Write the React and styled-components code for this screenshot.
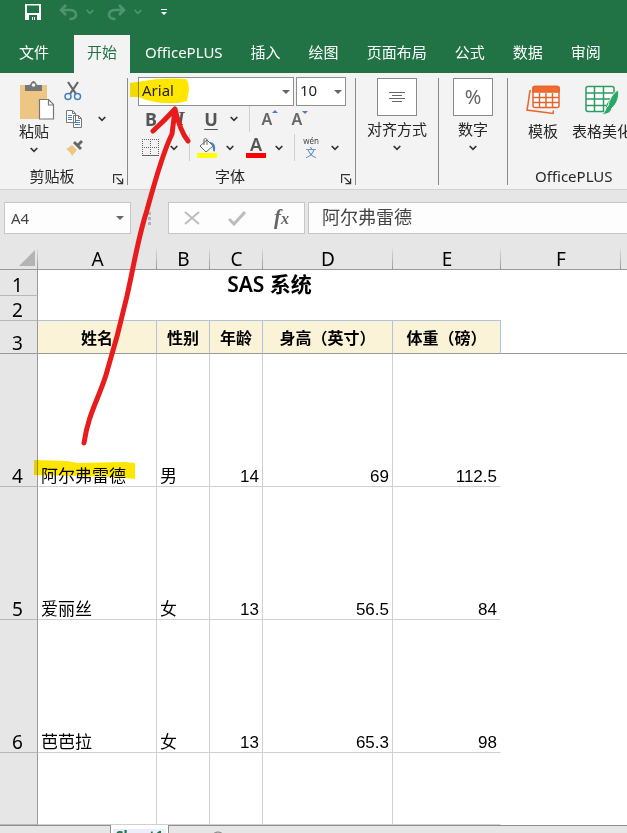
import React from "react";
import styled, { createGlobalStyle, css } from "styled-components";

const UI_FONT = '"Noto Sans", "Noto Sans CJK SC", sans-serif';
const CELL_FONT = '"Liberation Sans", "Noto Sans CJK SC", sans-serif';

const GlobalStyle = createGlobalStyle`
  * { box-sizing: border-box; }
  body { margin: 0; overflow: hidden; font-family: ${UI_FONT}; font-size: 15px; color: #262626; }
  button, input, select { font: inherit; color: inherit; }
`;

const Window = styled.div`
  position: relative;
  display: flex;
  flex-direction: column;
  height: 100vh;
  overflow: hidden;
  background: #fff;
`;

const PlainButton = styled.button`
  display: flex;
  align-items: center;
  justify-content: center;
  flex: none;
  padding: 0;
  border: 0;
  background: transparent;
`;

/* ---------- title bar and tabs ---------- */
const TitleBar = styled.header`
  display: flex;
  align-items: flex-start;
  flex: none;
  height: 35px;
  padding: 2px 23px;
  background: #217346;
`;

const QuickButton = styled(PlainButton)`
  width: ${(p) => (p.$narrow ? 24 : 20)}px;
  height: 20px;
  margin-right: ${(p) => p.$gap || 0}px;
  color: ${(p) => (p.$dim ? "#4f9470" : "#fff")};
`;

const TabBar = styled.nav`
  display: flex;
  flex: none;
  gap: 2px;
  height: 38px;
  padding-left: 6px;
  overflow: hidden;
  background: #217346;
`;

const Tab = styled(PlainButton)`
  padding: 0 13px 5px;
  margin-right: ${(p) => (p.$file ? 10 : 0)}px;
  line-height: 20px;
  white-space: nowrap;
  color: ${(p) => (p.$active ? "#217346" : "#fff")};
  background: ${(p) => (p.$active ? "#f3f3f3" : "transparent")};
`;

/* ---------- ribbon ---------- */
const Ribbon = styled.section`
  display: flex;
  flex: none;
  height: 117px;
  padding: 5px 0 4px;
  overflow: hidden;
  background: #f3f3f3;
  border-bottom: 1px solid #d2d2d2;
`;

const Group = styled.div`
  display: flex;
  flex-direction: column;
  flex: ${(p) => (p.$width ? "none" : "1 0 auto")};
  width: ${(p) => (p.$width ? `${p.$width}px` : "auto")};
  border-right: ${(p) => (p.$width ? "1px solid #8a8a8a" : "0")};
`;

const GroupBody = styled.div`
  display: flex;
  flex: 1;
  flex-direction: ${(p) => (p.$column ? "column" : "row")};
  padding-left: ${(p) => p.$inset || 0}px;
  justify-content: ${(p) => (p.$center ? "center" : "flex-start")};
`;

const GroupFooter = styled.div`
  display: flex;
  flex: none;
  height: 18px;
  align-items: center;
  white-space: nowrap;
  padding-left: ${(p) => p.$inset || 0}px;
`;

const GroupTitle = styled.span`
  flex: ${(p) => (p.$left ? "none" : 1)};
  padding-right: 5px;
  text-align: center;
  line-height: 18px;
`;

const Launcher = styled(PlainButton)`
  width: 18px;
  height: 18px;
  padding-top: 6px;
`;

const LargeButton = styled.button`
  display: flex;
  flex-direction: column;
  align-items: center;
  flex: none;
  width: ${(p) => p.$width}px;
  padding: ${(p) => p.$top || 0}px 0 0;
  border: 0;
  background: transparent;
  line-height: 22px;
  white-space: nowrap;
`;

const LargeLabel = styled.span`
  margin: ${(p) => p.$top || 0}px 0 5px;
`;

const PasteArt = styled.span`
  display: flex;
  padding-left: 5px;
`;

const IconFrame = styled.span`
  display: flex;
  align-items: center;
  justify-content: center;
  width: 40px;
  height: 38px;
  border: 1px solid #8a8a8a;
  background: #fff;
  color: #666;
  font-size: 20px;
`;

const ToolColumn = styled.div`
  display: flex;
  flex-direction: column;
`;

const ToolRow = styled.div`
  display: flex;
  flex: none;
  align-items: center;
  height: ${(p) => p.$height || 29}px;
  padding-left: ${(p) => p.$inset || 0}px;
`;

const ToolButton = styled(PlainButton)`
  width: ${(p) => p.$width || 30}px;
  height: 28px;
  color: #555;
`;

const ChevronButton = styled(PlainButton)`
  width: 16px;
  height: 28px;
  margin-right: ${(p) => p.$gap || 0}px;
`;

const Divider = styled.span`
  flex: none;
  width: 1px;
  height: 27px;
  margin: 0 2px 0 7px;
  background: #d0d0d0;
`;

const Letter = styled.span`
  font-size: 18px;
  line-height: 22px;
  font-weight: 700;
  ${(p) => p.$italic && css`
    font-family: "Liberation Serif", serif;
    font-style: italic;
  `}
  ${(p) => p.$underline && css`
    text-decoration: underline;
    text-underline-offset: 3px;
    text-decoration-thickness: 1px;
  `}
`;

const ComboWrap = styled.label`
  position: relative;
  display: flex;
  flex: none;
  width: ${(p) => p.$width}px;
  height: 29px;
  margin-right: 2px;
`;

const Combo = styled.select`
  appearance: none;
  width: 100%;
  padding: 0 20px 2px 3px;
  border: 1px solid #8f8f8f;
  border-radius: 0;
  background: #fff;
`;

const ComboArrow = styled.span`
  position: absolute;
  right: ${(p) => (p.$far ? 6 : 4)}px;
  top: 13px;
  border: 4px solid transparent;
  border-top-color: #666;
  border-bottom-width: 0;
  pointer-events: none;
`;

/* ---------- formula bar ---------- */
const FormulaBar = styled.div`
  display: flex;
  flex: none;
  padding: 12px 0 12px 4px;
  background: #e6e6e6;
  color: #444;
`;

const Field = styled.div`
  position: relative;
  display: flex;
  flex: ${(p) => (p.$width ? "none" : 1)};
  width: ${(p) => (p.$width ? `${p.$width}px` : "auto")};
  min-width: 0;
  height: 32px;
  margin-right: ${(p) => p.$gap || 0}px;
  border: 1px solid #c6c6c6;
  border-right-width: ${(p) => (p.$width ? 1 : 0)}px;
  background: #fdfdfd;
`;

const FieldInput = styled.input`
  width: 100%;
  min-width: 0;
  padding: 0 ${(p) => (p.$large ? 13 : 6)}px;
  border: 0;
  background: transparent;
  font-size: ${(p) => (p.$large ? 18 : 15)}px;
  outline: 0;
  height: ${(p) => (p.$large ? 25 : 30)}px;
`;

const FormulaButton = styled(PlainButton)`
  flex: 1;
`;

const Grip = styled.span`
  flex: none;
  width: 3px;
  height: 13px;
  margin: 10px 17px 0;
  background: repeating-linear-gradient(#b5b5b5 0 3px, transparent 3px 5px);
`;

/* ---------- sheet ---------- */
const Sheet = styled.main`
  flex: 1 0 auto;
  background: #fff;
`;

const Grid = styled.table`
  width: 100%;
  table-layout: fixed;
  border-collapse: separate;
  border-spacing: 0;
  color: #000;
`;

const Col = styled.col`
  width: ${(p) => (p.$width ? `${p.$width}px` : "auto")};
`;

const Row = styled.tr`
  height: ${(p) => p.$height}px;
`;

const ColumnHead = styled.th`
  padding: 2px 0 0;
  border-bottom: 1px solid #999;
  background: ${(p) => (p.$open ? "#e6e6e6" : "linear-gradient(#e6e6e6, #999) right / 1px 100% no-repeat #e6e6e6")};
  font-size: 19px;
  font-weight: 400;
  line-height: 20px;
`;

const Corner = styled(ColumnHead)`
  padding: 0 3px 0 0;

  svg { display: block; margin-left: auto; }
`;

const RowHead = styled.th`
  padding: 0 2px 0 0;
  border-right: 1px solid #999;
  border-bottom: 1px solid ${(p) => (p.$strong ? "#999" : "#b8b8b8")};
  background: #e6e6e6;
  font-size: 19px;
  font-weight: 400;
  line-height: 20px;
  vertical-align: bottom;
`;

const Blank = styled.td`
  padding: 0;
  border-bottom: ${(p) => (p.$frozen ? "1px solid #999" : "0")};
`;

const SheetTitle = styled.td`
  padding: 2px 0 0;
  font-family: "Noto Sans", "Noto Sans CJK SC", sans-serif;
  font-size: 21px;
  font-weight: 600;
  line-height: 24px;
  text-align: center;
`;

const Rule = styled.td`
  padding: 0;
  border-bottom: 1px solid #b0c4de;
`;

const FieldHead = styled.th`
  padding: 0;
  border-right: 1px solid #b0c4de;
  border-bottom: 1px solid #999;
  background: #faf3d7;
  font-family: "Noto Sans CJK SC", sans-serif;
  font-size: 16px;
  line-height: 20px;
  font-weight: 700;
`;

const Cell = styled.td`
  padding: 0 3px;
  border-right: 1px solid ${(p) => (p.$last ? "transparent" : "#d0d0d0")};
  border-bottom: 1px solid #d0d0d0;
  font-family: ${CELL_FONT};
  font-size: 17px;
  line-height: 18px;
  text-align: ${(p) => (p.$number ? "right" : "left")};
  vertical-align: bottom;
`;

/* ---------- sheet tabs ---------- */
const SheetTabs = styled.footer`
  display: flex;
  flex: none;
  height: 28px;
  background: #e6e6e6;
`;

const TabFiller = styled.div`
  flex: ${(p) => (p.$width ? "none" : 1)};
  width: ${(p) => p.$width || 0}px;
  padding-left: 41px;
  border: solid #8f8f8f;
  border-width: ${(p) => (p.$width ? "1px 1px 0 0" : "1px 0 0 1px")};
`;

const SheetTab = styled(PlainButton)`
  align-items: flex-start;
  width: 57px;
  border: solid #fff;
  border-width: 4px 2px 0;
  background: linear-gradient(#e9ecfb, #fff);
  color: #217346;
  font-size: 14px;
  font-weight: 700;
  line-height: 14px;
`;

const AddSheet = styled(PlainButton)`
  padding-top: 5px;
`;

/* ---------- ink markup over the window ---------- */
const Ink = styled.svg`
  position: absolute;
  left: 0;
  top: 0;
  pointer-events: none;
  mix-blend-mode: ${(p) => (p.$multiply ? "multiply" : "normal")};
`;

const Glyph = styled.svg`
  overflow: visible;
`;

const Chevron = ({ color = "#333", w = 8 }) => (
  <svg width={w} height="6" viewBox="0 0 8 6" fill="none" stroke={color} strokeWidth="1.7">
    <path d="M.7 1 4 4.3 7.3 1" />
  </svg>
);

const SaveIcon = () => (
  <svg width="16" height="16" viewBox="0 0 16 16">
    <path fill="#fff" fillRule="evenodd" d="M0 0h16v16H0zM2 1.500h12V9H2zM4 11h8v5h-2v-3H8v3H4z" />
    <path fill="#217346" d="M7 13h2v3H7z" />
    <path fill="#fff" d="M7 13h1v3H7z" />
  </svg>
);

const UndoIcon = ({ flip }) => (
  <svg width="19" height="17" viewBox="0 0 19 17" fill="none" stroke="currentColor" strokeWidth="2.600">
    <g transform={flip ? "translate(19 0) scale(-1 1)" : undefined}>
      <path d="M7 1 2 6l5 5M2.500 6H11c3 0 6 1.500 6 4.500S14.500 15 10.500 15" />
    </g>
  </svg>
);

const LauncherIcon = () => (
  <svg width="11" height="11" viewBox="0 0 11 11" fill="none" stroke="#333" strokeWidth="1.200">
    <path d="M.6 9V.6H9M3.500 3.500 9 9M9.600 4.500v5.100H4.500" />
  </svg>
);

const PasteIcon = () => (
  <svg width="36" height="40" viewBox="0 0 36 40">
    <path fill="#ecc682" d="M1 5h27v34H1z" />
    <path fill="#777" d="M6 5h4c2 0 2-4 4.500-4S17 5 19 5h4v6H6z" />
    <circle cx="14.500" cy="5" r="1.800" fill="#f3f3f3" />
    <path fill="#fff" stroke="#777" strokeWidth="1.200" d="M20.500 19.500h9l5 5V39h-14z" />
    <path fill="none" stroke="#777" strokeWidth="1.200" d="M29.500 19.500v5.500h5" />
  </svg>
);

const CutIcon = () => (
  <svg width="18" height="20" viewBox="0 0 18 20" fill="none">
    <path stroke="#666" strokeWidth="2.200" d="m4 1 8 12M14 1 6 13" />
    <circle cx="4" cy="15.500" r="3" stroke="#4a80bd" strokeWidth="1.500" />
    <circle cx="13.500" cy="15.500" r="3" stroke="#4a80bd" strokeWidth="1.500" />
  </svg>
);

const CopyIcon = () => (
  <svg width="18" height="20" viewBox="0 0 18 20" fill="#fff" stroke="#777">
    <path d="M1.500 1.500h6l3 3V13.500h-9zM8.500 6.500h5l3 3V18.500h-8z" />
    <path fill="none" d="M7.500 1.500v3h3M13.500 6.500v3h3" />
    <path stroke="#4a80bd" d="M3 6.500h4M3 8.500h4M3 10.500h4M10 11.500h5M10 13.500h5M10 15.500h5" />
  </svg>
);

const BrushIcon = () => (
  <svg width="18" height="16" viewBox="0 0 18 16">
    <path fill="#ecc682" d="M1 9c3-1 4-3 6-4l5 5c-2 2-3 4-5 6-1-3-3-5-6-7z" />
    <path fill="#666" d="m8 3 2-2 7 7-2 2zM12 4l4-4 2 2-4 4z" />
  </svg>
);

const BorderIcon = () => (
  <svg width="18" height="18" viewBox="0 0 18 18" fill="none" stroke="#666">
    <path strokeDasharray="1 1" d="M.5 0v16M16.500 0v16M0 .5h17M8.500 0v16M0 8.500h17" />
    <path d="M0 16.500h17" />
  </svg>
);

const FillIcon = () => (
  <svg width="20" height="20" viewBox="0 0 20 20" fill="none" stroke="#666">
    <path fill="#fff" d="m3 8 7-6 6 6-7 6z" />
    <path d="M7 7V2c0-2 3-2 3 0v5" />
    <path fill="#4a80bd" stroke="none" d="M12 4c4 0 7 2 6 9-1 1-2 0-2-1 0-3-1-5-4-8z" />
    <path fill="#ff0" stroke="none" d="M0 15h20v5H0z" />
  </svg>
);

const FontColorIcon = () => (
  <Glyph width="20" height="20" viewBox="0 0 20 20">
    <text x="10" y="13" textAnchor="middle" fontFamily="Noto Sans" fontWeight="600" fontSize="18" fill="#555">A</text>
    <path fill="red" d="M0 15h20v5H0z" />
  </Glyph>
);

const SizeIcon = ({ down }) => (
  <Glyph width="20" height="20" viewBox="0 0 20 20">
    <text x="8" y="16" textAnchor="middle" fontFamily="Noto Sans" fontWeight="600" fontSize="16" fill="#666">A</text>
    <path fill="#4a80bd" d={down ? "M13 2h6l-3 3z" : "M13 4h6l-3-3z"} />
  </Glyph>
);

const PhoneticIcon = () => (
  <Glyph width="20" height="22" viewBox="0 0 20 22" textAnchor="middle">
    <text x="9" y="7" fontFamily="Noto Sans" fontSize="8" fill="#444">wén</text>
    <text x="9" y="20" fontFamily="Noto Sans CJK SC" fontSize="11" fill="#4a80bd">文</text>
  </Glyph>
);

const CenterIcon = () => (
  <svg width="16" height="12" viewBox="0 0 16 12" stroke="#666">
    <path d="M0 1.500h16M3 4.500h10M0 7.500h16M3 10.500h10" />
  </svg>
);

const TemplateIcon = () => (
  <svg width="34" height="30" viewBox="0 0 34 30" fill="none" stroke="#e8642c" strokeWidth="1.500">
    <path d="M4.500 5C3 8 3.500 12 1 25l26 3.500.5-3" />
    <rect x="7" y="1.500" width="26" height="21" rx="2" fill="#fff" />
    <path fill="#f06c33" d="M7 7V3q0-1.500 1.500-1.500h23Q33 1.500 33 3v4z" />
    <path d="M7 12.500h26M7 17.500h26M13.500 8v15M20 8v15M26.500 8v15" />
  </svg>
);

const BeautifyIcon = () => (
  <svg width="34" height="30" viewBox="0 0 34 30" fill="none" stroke="#2c9d62" strokeWidth="1.500">
    <path fill="#fff" d="M21 26.500H3Q1 26.500 1 24.500V3.500Q1 1.500 3 1.500h24q2 0 2 2V9L22 20z" />
    <path d="M1 8h27M1 14h24M1 20.500h20M9.500 1.500v25M18.500 1.500v25" />
    <path fill="#2aa866" stroke="#f3f3f3" strokeWidth="1" d="M33 5c2 6-1 14-6 18-1 5-6 7-10 6 4-2 3-6 6-8 1-6 5-13 10-16z" />
  </svg>
);

const CrossIcon = () => (
  <svg width="16" height="14" viewBox="0 0 16 14" stroke="#bdbdbd" strokeWidth="2">
    <path d="m1 1 14 12M15 1 1 13" />
  </svg>
);

const CheckIcon = () => (
  <svg width="18" height="15" viewBox="0 0 18 15" fill="none" stroke="#bdbdbd" strokeWidth="3">
    <path d="m1 8 5 5L17 1" />
  </svg>
);

const Fx = styled.span`
  font: italic 700 21px/24px "Liberation Serif", serif;
  color: #666;

  small { font-size: 16px; }
`;

const tabs = ["开始", "OfficePLUS", "插入", "绘图", "页面布局", "公式", "数据", "审阅"];
const columns = [["A", 119], ["B", 53], ["C", 53], ["D", 130], ["E", 108], ["F", 120], ["", 0]];
const fields = ["姓名", "性别", "年龄", "身高（英寸）", "体重（磅）"];
const people = [
  ["阿尔弗雷德", "男", "14", "69", "112.5"],
  ["爱丽丝", "女", "13", "56.5", "84"],
  ["芭芭拉", "女", "13", "65.3", "98"],
];

export default function App() {
  return (
    <Window>
      <GlobalStyle />
      <TitleBar>
        <QuickButton aria-label="保存" $gap={15}><SaveIcon /></QuickButton>
        <QuickButton aria-label="撤销" $dim><UndoIcon /></QuickButton>
        <QuickButton aria-label="撤销列表" $dim $narrow $gap={4}><Chevron color="currentColor" /></QuickButton>
        <QuickButton aria-label="恢复" $dim><UndoIcon flip /></QuickButton>
        <QuickButton aria-label="恢复列表" $dim $narrow $gap={2}><Chevron color="currentColor" /></QuickButton>
        <QuickButton aria-label="自定义快速访问工具栏" $narrow>
          <svg width="6" height="8" viewBox="0 0 6 8" fill="#fff"><path d="M0 1h6v1H0zM0 4h6L3 7z" /></svg>
        </QuickButton>
      </TitleBar>

      <TabBar>
        <Tab $file>文件</Tab>
        {tabs.map((name, i) => <Tab key={name} $active={i === 0}>{name}</Tab>)}
      </TabBar>

      <Ribbon>
        <Group $width={128}>
          <GroupBody $inset={10}>
            <LargeButton $width={48} $top={2}>
              <PasteArt><PasteIcon /></PasteArt>
              <LargeLabel>粘贴</LargeLabel>
              <Chevron />
            </LargeButton>
            <ToolColumn>
              <ToolRow $height={26}><ToolButton aria-label="剪切"><CutIcon /></ToolButton></ToolRow>
              <ToolRow>
                <ToolButton aria-label="复制" $width={32}><CopyIcon /></ToolButton>
                <ToolButton aria-label="复制选项" $width={24}><Chevron /></ToolButton>
              </ToolRow>
              <ToolRow><ToolButton aria-label="格式刷" $width={32}><BrushIcon /></ToolButton></ToolRow>
            </ToolColumn>
          </GroupBody>
          <GroupFooter>
            <GroupTitle>剪贴板</GroupTitle>
            <Launcher aria-label="剪贴板选项"><LauncherIcon /></Launcher>
          </GroupFooter>
        </Group>

        <Group $width={228}>
          <GroupBody $column $inset={8}>
            <ToolRow $height={26} $inset={2}>
              <ComboWrap $width={156}>
                <Combo aria-label="字体" defaultValue="Arial"><option>Arial</option></Combo>
                <ComboArrow />
              </ComboWrap>
              <ComboWrap $width={50}>
                <Combo aria-label="字号" defaultValue="10"><option>10</option></Combo>
                <ComboArrow />
              </ComboWrap>
            </ToolRow>
            <ToolRow>
              <ToolButton aria-label="加粗"><Letter>B</Letter></ToolButton>
              <ToolButton aria-label="倾斜"><Letter $italic>I</Letter></ToolButton>
              <ToolButton aria-label="下划线"><Letter $underline>U</Letter></ToolButton>
              <ChevronButton aria-label="下划线样式"><Chevron /></ChevronButton>
              <Divider />
              <ToolButton aria-label="增大字号" $width={34}><SizeIcon /></ToolButton>
              <ToolButton aria-label="减小字号" $width={26}><SizeIcon down /></ToolButton>
            </ToolRow>
            <ToolRow>
              <ToolButton aria-label="边框"><BorderIcon /></ToolButton>
              <ChevronButton aria-label="边框样式"><Chevron /></ChevronButton>
              <Divider />
              <ToolButton aria-label="填充颜色"><FillIcon /></ToolButton>
              <ChevronButton aria-label="填充颜色列表" $gap={3}><Chevron /></ChevronButton>
              <ToolButton aria-label="字体颜色"><FontColorIcon /></ToolButton>
              <ChevronButton aria-label="字体颜色列表"><Chevron /></ChevronButton>
              <Divider />
              <ToolButton aria-label="拼音"><PhoneticIcon /></ToolButton>
              <ChevronButton aria-label="拼音选项"><Chevron /></ChevronButton>
            </ToolRow>
          </GroupBody>
          <GroupFooter>
            <GroupTitle>字体</GroupTitle>
            <Launcher aria-label="字体选项"><LauncherIcon /></Launcher>
          </GroupFooter>
        </Group>

        <Group $width={83}>
          <GroupBody $center>
            <LargeButton $width={80}>
              <IconFrame><CenterIcon /></IconFrame>
              <LargeLabel $top={2}>对齐方式</LargeLabel>
              <Chevron />
            </LargeButton>
          </GroupBody>
        </Group>

        <Group $width={69}>
          <GroupBody $center>
            <LargeButton $width={60}>
              <IconFrame>%</IconFrame>
              <LargeLabel $top={2}>数字</LargeLabel>
              <Chevron />
            </LargeButton>
          </GroupBody>
        </Group>

        <Group>
          <GroupBody $inset={6}>
            <LargeButton $width={58} $top={7}>
              <TemplateIcon />
              <LargeLabel $top={5}>模板</LargeLabel>
            </LargeButton>
            <LargeButton $width={60} $top={7}>
              <BeautifyIcon />
              <LargeLabel $top={5}>表格美化</LargeLabel>
            </LargeButton>
          </GroupBody>
          <GroupFooter $inset={27}><GroupTitle $left>OfficePLUS</GroupTitle></GroupFooter>
        </Group>
      </Ribbon>

      <FormulaBar>
        <Field $width={127}>
          <FieldInput aria-label="名称框" defaultValue="A4" />
          <ComboArrow $far />
        </Field>
        <Grip />
        <Field $width={137} $gap={3}>
          <FormulaButton aria-label="取消"><CrossIcon /></FormulaButton>
          <FormulaButton aria-label="输入"><CheckIcon /></FormulaButton>
          <FormulaButton aria-label="插入函数"><Fx>f<small>x</small></Fx></FormulaButton>
        </Field>
        <Field>
          <FieldInput $large aria-label="编辑栏" defaultValue="阿尔弗雷德" />
        </Field>
      </FormulaBar>

      <Sheet>
        <Grid>
          <colgroup>
            <Col $width={38} />
            {columns.map(([name, width]) => <Col key={name} $width={width} />)}
          </colgroup>
          <thead>
            <Row $height={24}>
              <Corner aria-label="全选">
                <svg width="16" height="16" viewBox="0 0 16 16"><path fill="#b4b4b4" d="M16 0v16H0z" /></svg>
              </Corner>
              {columns.map(([name]) => <ColumnHead key={name} $open={!name}>{name}</ColumnHead>)}
            </Row>
          </thead>
          <tbody>
            <Row $height={26}>
              <RowHead>1</RowHead>
              <SheetTitle colSpan={5}>SAS 系统</SheetTitle>
              <Blank colSpan={2} />
            </Row>
            <Row $height={25}>
              <RowHead>2</RowHead>
              <Rule colSpan={5} />
              <Blank colSpan={2} />
            </Row>
            <Row $height={33}>
              <RowHead $strong>3</RowHead>
              {fields.map((name) => <FieldHead key={name}>{name}</FieldHead>)}
              <Blank colSpan={2} $frozen />
            </Row>
            {people.map((person, r) => (
              <Row key={person[0]} $height={133}>
                <RowHead>{r + 4}</RowHead>
                {person.map((value, c) => (
                  <Cell key={c} $number={c > 1} $last={c === 4}>{value}</Cell>
                ))}
                <Blank colSpan={2} />
              </Row>
            ))}
            <Row $height={72}>
              <RowHead />
              {fields.map((name, c) => <Cell key={name} $last={c === 4} />)}
              <Blank colSpan={2} />
            </Row>
          </tbody>
        </Grid>
      </Sheet>

      <SheetTabs>
        <TabFiller $width={111} />
        <SheetTab>Sheet1</SheetTab>
        <TabFiller>
          <AddSheet aria-label="新工作表">
            <svg width="16" height="16" viewBox="0 0 16 16" fill="none" stroke="#777">
              <circle cx="8" cy="8" r="7" /><path d="M8 4v8M4 8h8" />
            </svg>
          </AddSheet>
        </TabFiller>
      </SheetTabs>

      <Ink $multiply width="200" height="500" fill="#ffe600" aria-hidden="true">
        <path d="M130 83l7-1 20-3q16-1 29 0 3 3 3 11l-2 11q-10 3-20 2-14 0-29-6l-8 0z" />
        <path d="M34 460l33 1 10 2 48-1 10 1v16l-20-2-35-1-46-1z" />
      </Ink>
      <Ink width="200" height="500" fill="none" stroke="#e81c1c" strokeWidth="5" strokeLinecap="round" strokeLinejoin="round" aria-hidden="true">
        <path d="M84 443C88 415 98 400 106 375C113 352 122 318 127 296C136 255 138 238 147 210C153 188 164 150 172 134L175 110M153 131Q164 121 175 109Q180 131 188 141" />
      </Ink>
    </Window>
  );
}
